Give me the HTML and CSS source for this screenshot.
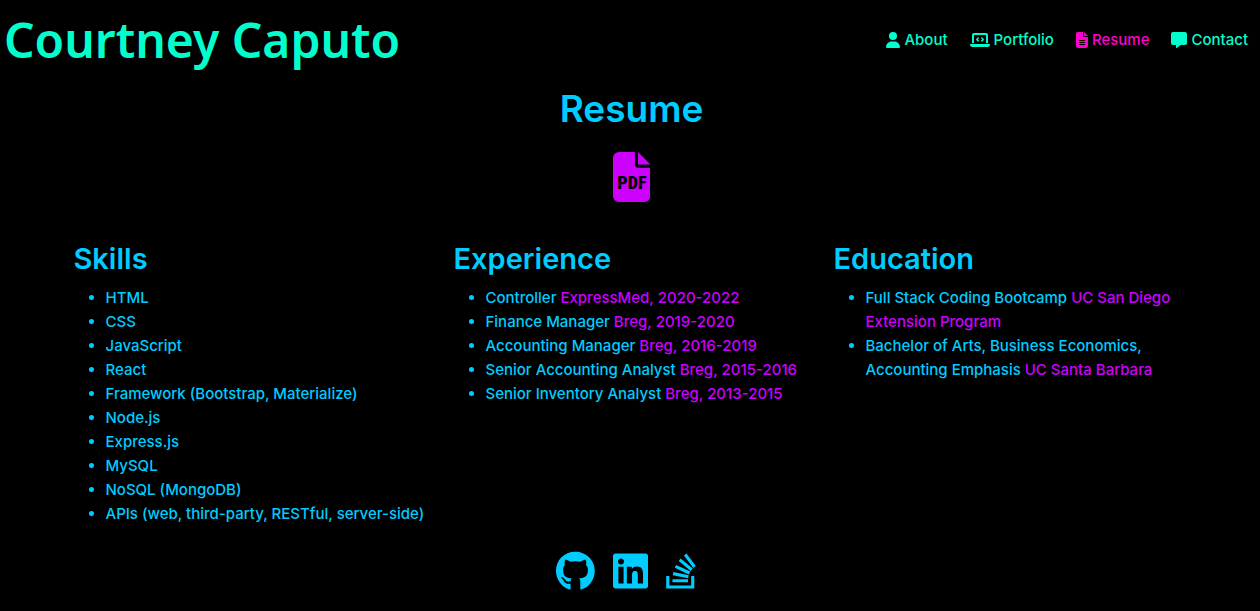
FILE: index.html
```html
<!DOCTYPE html>
<html lang="en">
<head>
<meta charset="utf-8">
<meta name="viewport" content="width=device-width, initial-scale=1">
<title>Courtney Caputo</title>
<link rel="stylesheet" href="styles.css">
</head>
<body>
<header class="site-header">
  <h1 class="brand">Courtney Caputo</h1>
  <nav class="nav" aria-label="Main">
    <a class="nav-link" href="#about"><svg class="nav-icon" viewBox="0 0 448 512" aria-hidden="true"><path d="M224 256A128 128 0 1 0 224 0a128 128 0 1 0 0 256zm-45.7 48C79.8 304 0 383.8 0 482.3C0 498.7 13.3 512 29.7 512H418.3c16.4 0 29.7-13.3 29.7-29.7C448 383.8 368.2 304 269.7 304H178.3z"/></svg>About</a>
    <a class="nav-link" href="#portfolio"><svg class="nav-icon" viewBox="0 0 640 512" aria-hidden="true"><path d="M64 96c0-35.3 28.7-64 64-64H512c35.3 0 64 28.7 64 64V352H512V96H128V352H64V96zM0 403.2C0 392.6 8.6 384 19.2 384H620.8c10.6 0 19.2 8.6 19.2 19.2c0 42.4-34.4 76.8-76.8 76.8H76.8C34.4 480 0 445.6 0 403.2zM281 209l-31 31 31 31c9.4 9.4 9.4 24.6 0 33.9s-24.6 9.4-33.9 0l-48-48c-9.4-9.4-9.4-24.6 0-33.9l48-48c9.4-9.4 24.6-9.4 33.9 0s9.4 24.6 0 33.9zM393 175l48 48c9.4 9.4 9.4 24.6 0 33.9l-48 48c-9.4 9.4-24.6 9.4-33.9 0s-9.4-24.6 0-33.9l31-31-31-31c-9.4-9.4-9.4-24.6 0-33.9s24.6-9.4 33.9 0z"/></svg>Portfolio</a>
    <a class="nav-link nav-link-active" href="#resume" aria-current="page"><svg class="nav-icon" viewBox="0 0 384 512" aria-hidden="true"><path fill-rule="evenodd" d="M64 0C28.7 0 0 28.7 0 64V448c0 35.3 28.7 64 64 64H320c35.3 0 64-28.7 64-64V160H256c-17.7 0-32-14.3-32-32V0H64zM256 0V128H384L256 0zM112 256H272c8.8 0 16 7.2 16 16s-7.2 16-16 16H112c-8.8 0-16-7.2-16-16s7.2-16 16-16zm0 64H272c8.8 0 16 7.2 16 16s-7.2 16-16 16H112c-8.8 0-16-7.2-16-16s7.2-16 16-16zm0 64H272c8.8 0 16 7.2 16 16s-7.2 16-16 16H112c-8.8 0-16-7.2-16-16s7.2-16 16-16z"/></svg>Resume</a>
    <a class="nav-link" href="#contact"><svg class="nav-icon" viewBox="0 0 512 512" aria-hidden="true"><path d="M64 0C28.7 0 0 28.7 0 64V352c0 35.3 28.7 64 64 64h96v80c0 6.1 3.4 11.6 8.8 14.3s11.9 2.1 16.8-1.5L309.3 416H448c35.3 0 64-28.7 64-64V64c0-35.3-28.7-64-64-64H64z"/></svg>Contact</a>
  </nav>
</header>
<main class="resume" id="resume">
  <h2 class="page-title">Resume</h2>
  <a class="pdf-link" href="#resume-pdf" aria-label="Download resume">
    <svg class="pdf-icon" viewBox="0 0 384 512"><path d="M64 0C28.7 0 0 28.7 0 64V448c0 35.3 28.7 64 64 64H320c35.3 0 64-28.7 64-64V160H256c-17.7 0-32-14.3-32-32V0H64zM256 0V128H384L256 0z"/><text class="pdf-label" x="194" y="374" text-anchor="middle">PDF</text></svg>
  </a>
  <div class="columns">
    <section>
      <h3 class="section-title">Skills</h3>
      <ul class="list">
        <li>HTML</li>
        <li>CSS</li>
        <li>JavaScript</li>
        <li>React</li>
        <li>Framework (Bootstrap, Materialize)</li>
        <li>Node.js</li>
        <li>Express.js</li>
        <li>MySQL</li>
        <li>NoSQL (MongoDB)</li>
        <li>APIs (web, third-party, RESTful, server-side)</li>
      </ul>
    </section>
    <section>
      <h3 class="section-title">Experience</h3>
      <ul class="list">
        <li>Controller <span class="detail">ExpressMed, 2020-2022</span></li>
        <li>Finance Manager <span class="detail">Breg, 2019-2020</span></li>
        <li>Accounting Manager <span class="detail">Breg, 2016-2019</span></li>
        <li>Senior Accounting Analyst <span class="detail">Breg, 2015-2016</span></li>
        <li>Senior Inventory Analyst <span class="detail">Breg, 2013-2015</span></li>
      </ul>
    </section>
    <section>
      <h3 class="section-title">Education</h3>
      <ul class="list">
        <li>Full Stack Coding Bootcamp <span class="detail">UC San Diego Extension Program</span></li>
        <li>Bachelor of Arts, Business Economics, Accounting Emphasis <span class="detail">UC Santa Barbara</span></li>
      </ul>
    </section>
  </div>
</main>
<footer class="social">
  <a class="social-link" href="#github" aria-label="GitHub"><svg class="social-icon" viewBox="0 0 496 512"><path d="M165.900 397.400c0 2-2.300 3.600-5.200 3.600-3.300.3-5.600-1.300-5.600-3.600 0-2 2.300-3.600 5.200-3.600 3-.3 5.600 1.300 5.600 3.600zm-31.100-4.500c-.7 2 1.300 4.300 4.300 4.900 2.600 1 5.600 0 6.200-2s-1.300-4.300-4.300-5.200c-2.600-.7-5.500.3-6.200 2.300zm44.200-1.700c-2.900.7-4.900 2.600-4.600 4.900.3 2 2.900 3.300 5.900 2.600 2.900-.7 4.900-2.600 4.600-4.600-.3-1.900-3-3.200-5.900-2.900zM244.800 8C106.100 8 0 113.300 0 252c0 110.900 69.800 205.800 169.500 239.200 12.800 2.300 17.300-5.600 17.300-12.100 0-6.200-.3-40.400-.3-61.400 0 0-70 15-84.700-29.800 0 0-11.400-29.100-27.800-36.600 0 0-22.900-15.700 1.600-15.400 0 0 24.900 2 38.600 25.800 21.900 38.600 58.600 27.500 72.900 20.900 2.300-16 8.800-27.100 16-33.700-55.900-6.200-112.300-14.300-112.300-110.500 0-27.500 7.600-41.300 23.600-58.900-2.600-6.500-11.100-33.300 2.600-67.900 20.900-6.500 69 27 69 27 20-5.600 41.500-8.500 62.800-8.500s42.800 2.900 62.800 8.500c0 0 48.100-33.600 69-27 13.700 34.700 5.200 61.400 2.600 67.900 16 17.700 25.800 31.500 25.800 58.900 0 96.500-58.900 104.200-114.800 110.500 9.200 7.900 17 22.900 17 46.400 0 33.700-.3 75.400-.3 83.600 0 6.500 4.600 14.400 17.300 12.100C428.200 457.800 496 362.900 496 252 496 113.300 383.500 8 244.800 8z"/></svg></a>
  <a class="social-link" href="#linkedin" aria-label="LinkedIn"><svg class="social-icon" viewBox="0 0 448 512"><path d="M416 32H31.900C14.300 32 0 46.500 0 64.300v383.400C0 465.500 14.300 480 31.900 480H416c17.600 0 32-14.500 32-32.300V64.300c0-17.800-14.400-32.300-32-32.300zM135.400 416H69V202.200h66.500V416zm-33.200-243c-21.300 0-38.500-17.300-38.500-38.500S80.900 96 102.200 96c21.200 0 38.500 17.300 38.500 38.500 0 21.300-17.200 38.500-38.500 38.500zm282.100 243h-66.400V312c0-24.800-.5-56.700-34.500-56.700-34.600 0-39.900 27-39.900 54.900V416h-66.400V202.200h63.700v29.200h.9c8.900-16.800 30.600-34.500 62.900-34.500 67.200 0 79.700 44.300 79.700 101.900V416z"/></svg></a>
  <a class="social-link" href="#stack-overflow" aria-label="Stack Overflow"><svg class="social-icon" viewBox="0 0 384 512"><path d="M290.700 311L95 269.700 86.800 309l195.700 41zm51-87L188.200 95.700l-25.500 30.800 153.500 128.300zm-31.200 39.700L129.200 179l-16.700 36.500L293.700 300zM262 32l-32 24 119.300 160.300 32-24zm20.500 328h-200v39.700h200zm39.700 80H42.700V320h-40v160h359.500V320h-40z"/></svg></a>
</footer>
</body>
</html>
```
FILE: styles.css
```css
* {
  box-sizing: border-box;
}

body {
  margin: 0;
  background: #000;
  color: #00ccff;
  font-family: Inter, "Liberation Sans", sans-serif;
  font-size: 15px;
  font-weight: 500;
  line-height: 24px;
}

h1, h2, h3, ul {
  margin: 0;
}

a {
  text-decoration: none;
}

svg {
  display: block;
  fill: currentColor;
}

.site-header {
  display: flex;
  justify-content: space-between;
  align-items: center;
  padding: 8px 12px 8px 4px;
  color: #00ffcc;
}

.brand {
  font-family: "Noto Sans", sans-serif;
  font-size: 48px;
  font-weight: 600;
  line-height: 64px;
}

.nav {
  display: flex;
  gap: 22px;
}

.nav-link {
  display: flex;
  align-items: center;
  gap: 4px;
  color: #00ffcc;
}

.nav-link-active {
  color: #ff00cc;
}

.nav-icon {
  height: 16px;
}

.resume {
  display: flex;
  flex-direction: column;
  align-items: center;
  padding: 5px 0 0 3px;
}

.page-title {
  font-size: 37px;
  font-weight: 600;
  line-height: 48px;
}

.pdf-link {
  margin-top: 19px;
  color: #cc00ff;
}

.pdf-icon {
  height: 50px;
}

.pdf-label {
  fill: #000;
  font-family: "Roboto Condensed", Roboto, sans-serif;
  font-size: 186px;
  font-weight: 800;
}

.columns {
  display: grid;
  grid-template-columns: repeat(3, 1fr);
  width: 100%;
  max-width: 1140px;
  margin-top: 38px;
}

.columns > section {
  padding: 0 12px;
}

.section-title {
  margin-bottom: 8px;
  font-size: 29px;
  font-weight: 600;
  line-height: 38px;
}

.list {
  padding-left: 32px;
}

.detail {
  color: #cc00ff;
}

.social {
  display: flex;
  justify-content: center;
  gap: 18px;
  padding: 25px 8px 20px 0;
}

.social-link {
  color: #00ccff;
}

.social-icon {
  height: 40px;
}
```
